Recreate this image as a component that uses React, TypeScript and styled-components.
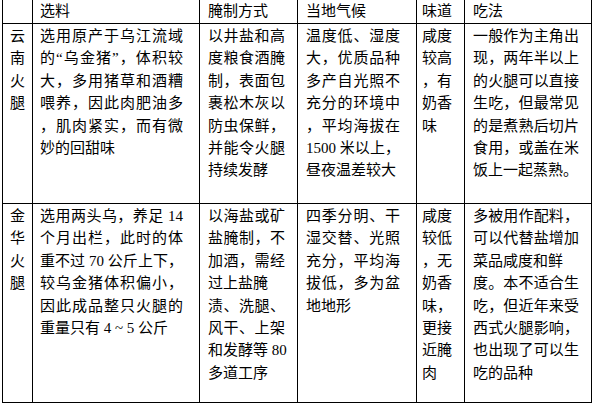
import React from "react";
import styled, { createGlobalStyle } from "styled-components";

const Global = createGlobalStyle`
  html, body { margin: 0; padding: 0; background: #ffffff; }
  body { font-family: "Liberation Serif", "Noto Sans CJK SC", serif; color: #000; }
`;

const Page = styled.div`
  padding: 0 0 0 2px;
  width: 593px;
  height: 408px;
  box-sizing: border-box;
  overflow: hidden;
`;

const Table = styled.table`
  border-collapse: collapse;
  table-layout: fixed;
  width: 589px;
  font-size: 15px;
  line-height: 22.4px;
`;

const HeadCell = styled.th<{ $pl: number }>`
  border: 1px solid #000;
  border-top: none;
  height: 23px;
  padding: 0 0 0 ${(p) => p.$pl}px;
  font-weight: normal;
  text-align: left;
  vertical-align: middle;
`;

const Cell = styled.td<{ $pl: number; $pr: number }>`
  border: 1px solid #000;
  padding: 1px ${(p) => p.$pr}px 0 ${(p) => p.$pl}px;
  vertical-align: top;
  text-align: left;
`;

const NameCell = styled.td`
  border: 1px solid #000;
  padding: 1px 0 0;
  vertical-align: top;
  text-align: center;
`;

const Line = styled.span<{ $justify: boolean }>`
  display: block;
  white-space: nowrap;
  text-align: ${(p) => (p.$justify ? "justify" : "left")};
  text-align-last: ${(p) => (p.$justify ? "justify" : "left")};
  text-justify: inter-character;
`;

const NameChar = styled.span`
  display: block;
  text-align: center;
`;

type L = string | { t: string; left: true };

const widths = [30, 167, 98, 119, 48, 127];
const heads = ["", "选料", "腌制方式", "当地气候", "味道", "吃法"];
const headPads = [6, 7, 8, 8, 5, 8];

const cols: { pl: number; pr: number; justify: boolean }[] = [
  { pl: 7, pr: 16, justify: true },
  { pl: 8, pr: 12, justify: true },
  { pl: 8, pr: 16, justify: true },
  { pl: 5, pr: 6, justify: false },
  { pl: 8, pr: 12, justify: true },
];

const rows: { name: string; h: number; cells: L[][] }[] = [
  {
    name: "云南火腿",
    h: 180,
    cells: [
      [
        "选用原产于乌江流域",
        "的“乌金猪”，体积较",
        "大，多用猪草和酒糟",
        "喂养，因此肉肥油多",
        "，肌肉紧实，而有微",
        "妙的回甜味",
      ],
      ["以井盐和高", "度粮食酒腌", "制，表面包", "裹松木灰以", "防虫保鲜，", "并能令火腿", "持续发酵"],
      ["温度低、湿度", "大，优质品种", "多产自光照不", "充分的环境中", "，平均海拔在", "1500 米以上，", "昼夜温差较大"],
      ["咸度", "较高", "，有", "奶香", "味"],
      ["一般作为主角出", "现，两年半以上", "的火腿可以直接", "生吃，但最常见", "的是煮熟后切片", "食用，或盖在米", "饭上一起蒸熟。"],
    ],
  },
  {
    name: "金华火腿",
    h: 199,
    cells: [
      [
        "选用两头乌，养足 14",
        "个月出栏，此时的体",
        "重不过 70 公斤上下，",
        "较乌金猪体积偏小，",
        "因此成品整只火腿的",
        "重量只有 4 ~ 5 公斤",
      ],
      ["以海盐或矿", "盐腌制，不", "加酒，需经", { t: "过上盐腌", left: true }, "渍、洗腿、", "风干、上架", "和发酵等 80", "多道工序"],
      ["四季分明、干", "湿交替、光照", "充分，平均海", "拔低，多为盆", "地地形"],
      ["咸度", "较低", "，无", "奶香", "味，", "更接", "近腌", "肉"],
      ["多被用作配料，", "可以代替盐增加", { t: "菜品咸度和鲜", left: true }, "度。本不适合生", "吃，但近年来受", "西式火腿影响，", "也出现了可以生", "吃的品种"],
    ],
  },
];

const BodyRow = styled.tr<{ $h: number }>`
  height: ${(p) => p.$h}px;
`;

export default function App() {
  return (
    <Page>
      <Global />
      <Table>
        <colgroup>
          {widths.map((w, i) => (
            <col key={i} style={{ width: w }} />
          ))}
        </colgroup>
        <thead>
          <tr>
            {heads.map((h, i) => (
              <HeadCell key={i} $pl={headPads[i]}>
                {h}
              </HeadCell>
            ))}
          </tr>
        </thead>
        <tbody>
          {rows.map((r) => (
            <BodyRow key={r.name} $h={r.h}>
              <NameCell>
                {Array.from(r.name).map((c, i) => (
                  <NameChar key={i}>{c}</NameChar>
                ))}
              </NameCell>
              {r.cells.map((lines, ci) => (
                <Cell key={ci} $pl={cols[ci].pl} $pr={cols[ci].pr}>
                  {lines.map((l, li) => {
                    const text = typeof l === "string" ? l : l.t;
                    const just = cols[ci].justify && typeof l === "string" && li < lines.length - 1;
                    return (
                      <Line key={li} $justify={just}>
                        {text}
                      </Line>
                    );
                  })}
                </Cell>
              ))}
            </BodyRow>
          ))}
        </tbody>
      </Table>
    </Page>
  );
}
